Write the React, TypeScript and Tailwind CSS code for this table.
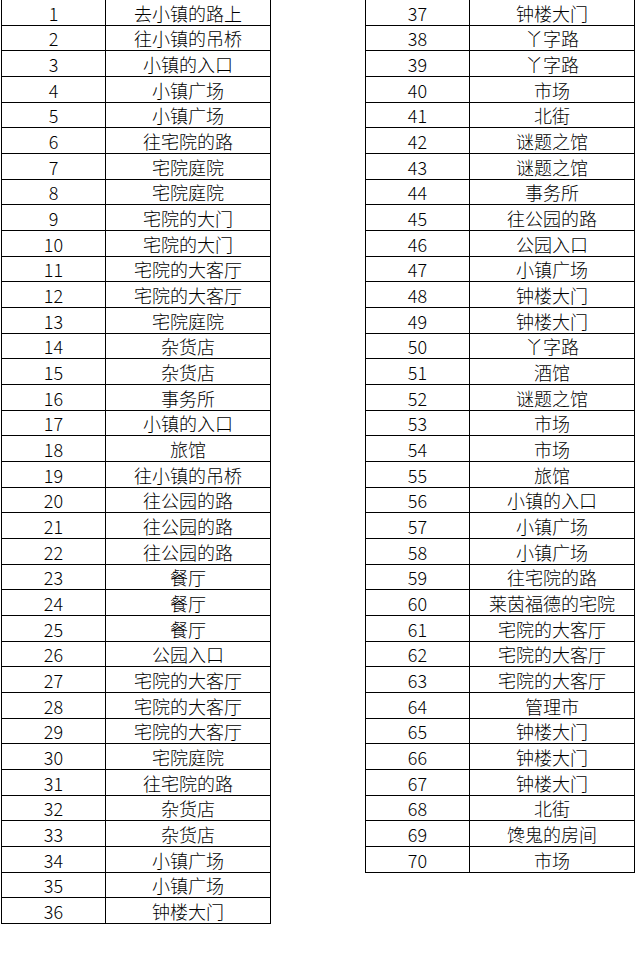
const left = [
  "去小镇的路上", "往小镇的吊桥", "小镇的入口", "小镇广场", "小镇广场", "往宅院的路",
  "宅院庭院", "宅院庭院", "宅院的大门", "宅院的大门", "宅院的大客厅", "宅院的大客厅",
  "宅院庭院", "杂货店", "杂货店", "事务所", "小镇的入口", "旅馆",
  "往小镇的吊桥", "往公园的路", "往公园的路", "往公园的路", "餐厅", "餐厅",
  "餐厅", "公园入口", "宅院的大客厅", "宅院的大客厅", "宅院的大客厅", "宅院庭院",
  "往宅院的路", "杂货店", "杂货店", "小镇广场", "小镇广场", "钟楼大门",
]

const right = [
  "钟楼大门", "丫字路", "丫字路", "市场", "北街", "谜题之馆",
  "谜题之馆", "事务所", "往公园的路", "公园入口", "小镇广场", "钟楼大门",
  "钟楼大门", "丫字路", "酒馆", "谜题之馆", "市场", "市场",
  "旅馆", "小镇的入口", "小镇广场", "小镇广场", "往宅院的路", "莱茵福德的宅院",
  "宅院的大客厅", "宅院的大客厅", "宅院的大客厅", "管理市", "钟楼大门", "钟楼大门",
  "钟楼大门", "北街", "馋鬼的房间", "市场",
]

const ROW = 924 / 36

interface TableProps {
  rows: string[]
  start: number
}

const Table = ({ rows, start }: TableProps) => {
  return (
    <div className="flex flex-col w-[270px] border-x border-black">
      {rows.map((name, i) => {
        const h = Math.round((i + 1) * ROW) - Math.round(i * ROW)
        return (
          <div
            key={i}
            className="grid grid-cols-[104px_1fr] border-b border-black"
            style={{ height: h }}
          >
            <div className="flex items-center justify-center border-r border-black">{start + i}</div>
            <div className="flex items-center justify-center">{name}</div>
          </div>
        )
      })}
    </div>
  )
}

export default function App() {
  return (
    <div
      className="flex items-start w-[635px] h-[959px] bg-white text-black text-[18px] font-light leading-none pl-px gap-[94px]"
      style={{ fontFamily: '"Noto Sans CJK SC", "Noto Sans", sans-serif' }}
    >
      <Table rows={left} start={1} />
      <Table rows={right} start={37} />
    </div>
  )
}
